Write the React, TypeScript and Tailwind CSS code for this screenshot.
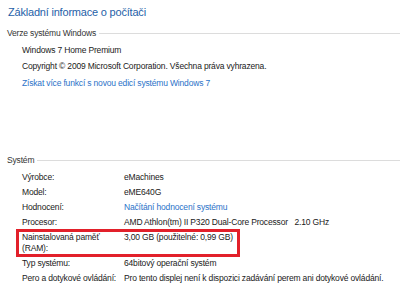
import * as React from "react";

const rows: { label: string; value: string; link?: boolean; mark?: boolean }[] = [
  { label: "Výrobce:", value: "eMachines" },
  { label: "Model:", value: "eME640G" },
  { label: "Hodnocení:", value: "Načítání hodnocení systému", link: true },
  { label: "Procesor:", value: "AMD Athlon(tm) II P320 Dual-Core Processor\u00a0\u00a0 2.10 GHz" },
  { label: "Nainstalovaná paměť (RAM):", value: "3,00 GB (použitelné: 0,99 GB)", mark: true },
  { label: "Typ systému:", value: "64bitový operační systém" },
  { label: "Pero a dotykové ovládání:", value: "Pro tento displej není k dispozici zadávání perem ani dotykové ovládání." },
];

function SectionHeader({ title, className }: { title: string; className?: string }) {
  return (
    <div className={`flex items-center pl-[7px] text-[#333] ${className ?? ""}`}>
      <span className="whitespace-nowrap">{title}</span>
      <span className="ml-[3px] h-px flex-1 bg-[#dcdcdc]" />
    </div>
  );
}

export default function App() {
  return (
    <div
      className="h-[290px] w-[400px] overflow-hidden bg-white text-[8.5px] leading-[11px] tracking-[-0.17px] text-[#1a1a1a]"
      style={{ fontFamily: '"Liberation Sans", Arial, sans-serif' }}
    >
      <h1 className="pl-[8px] pt-[4px] text-[11px] leading-[16px] font-normal tracking-[-0.2px] text-[#1f5fa8]">
        Základní informace o počítači
      </h1>

      <SectionHeader title="Verze systému Windows" className="mt-[8px]" />
      <div className="pl-[22px]">
        <p className="mt-[6px]">Windows 7 Home Premium</p>
        <p className="mt-[5px]">Copyright © 2009 Microsoft Corporation. Všechna práva vyhrazena.</p>
        <p className="mt-[6px] text-[#2a72c8]">Získat více funkcí s novou edicí systému Windows 7</p>
      </div>

      <SectionHeader title="Systém" className="mt-[66px]" />
      <div className="mt-[6px] flex flex-col gap-[4px] pl-[22px]">
        {rows.map((r) => (
          <div key={r.label} className="relative flex">
            <div className="w-[102px] shrink-0 pr-[2px]">{r.label}</div>
            <div className={`whitespace-nowrap ${r.link ? "text-[#2a72c8]" : ""}`}>{r.value}</div>
            {r.mark && (
              <span className="pointer-events-none absolute -top-[3px] -bottom-[3px] -left-[6px] w-[224px] border-[3px] border-[#e2202a]" />
            )}
          </div>
        ))}
      </div>
    </div>
  );
}
